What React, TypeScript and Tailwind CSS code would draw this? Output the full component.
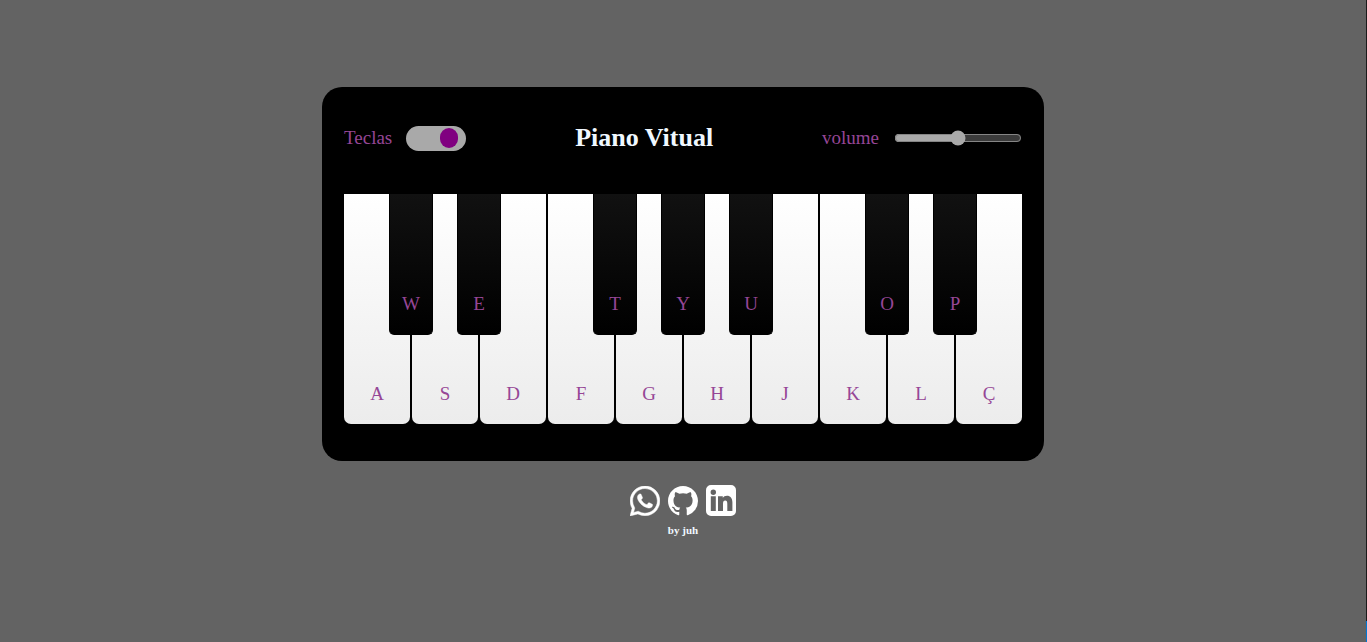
import { useState } from "react";
import { BsWhatsapp, BsGithub } from "react-icons/bs";

const keys: { white: string; black?: string }[] = [
  { white: "A", black: "W" },
  { white: "S", black: "E" },
  { white: "D" },
  { white: "F", black: "T" },
  { white: "G", black: "Y" },
  { white: "H", black: "U" },
  { white: "J" },
  { white: "K", black: "O" },
  { white: "L", black: "P" },
  { white: "Ç" },
];

function LinkedinIcon() {
  return (
    <svg viewBox="0 0 30 31" className="h-[31px] w-[30px]" aria-hidden="true">
      <path
        fill="currentColor"
        fillRule="evenodd"
        d="M5 0h20a5 5 0 0 1 5 5v21a5 5 0 0 1-5 5H5a5 5 0 0 1-5-5V5a5 5 0 0 1 5-5zM7.3 4.6a2.7 2.7 0 1 0 0 5.4a2.7 2.7 0 1 0 0-5.4zM4.8 11.2V26h5V11.2zM12 11.2V26h5v-7.2c0-2.1.7-3.2 2.2-3.2s2.1 1.1 2.1 3.2V26h5.1v-8.6c0-4.4-2.1-6.7-5.4-6.7c-2 0-3.4.9-4.2 2.2v-1.7z"
      />
    </svg>
  );
}

const links = [
  { label: "WhatsApp", icon: <BsWhatsapp className="size-[30px]" strokeWidth={0.25} /> },
  { label: "GitHub", icon: <BsGithub className="size-[30px]" /> },
  { label: "LinkedIn", icon: <LinkedinIcon /> },
];

export default function App() {
  const [showKeys, setShowKeys] = useState(true);
  const [volume, setVolume] = useState(0.5);
  const labelClass = showKeys ? "" : "invisible";

  return (
    <div className="flex min-h-screen bg-[#636363] font-['Liberation_Serif','Times_New_Roman',serif]">
      <main className="flex flex-1 flex-col items-center justify-center pb-[18px]">
        <section className="rounded-[20px] bg-black px-[22px] pt-9 pb-[37px]">
          <header className="flex items-center justify-between text-[19px] leading-7 text-[#964696]">
            <label className="flex items-center gap-[14px]">
              Teclas
              <input
                type="checkbox"
                checked={showKeys}
                onChange={(e) => setShowKeys(e.target.checked)}
                className="flex h-[25px] w-[60px] appearance-none items-center rounded-full bg-[#a9a9a9] px-2 before:h-5 before:w-[18px] before:rounded-full before:bg-[#800080] checked:justify-end"
              />
            </label>
            <h1 className="text-[26px] leading-[30px] font-bold text-[#f0f8ff]">Piano Vitual</h1>
            <label className="flex items-center gap-[15px]">
              volume
              <input
                type="range"
                min={0}
                max={1}
                step="any"
                value={volume}
                onChange={(e) => setVolume(Number(e.target.value))}
                className="w-32 accent-[#a9a9a9]"
              />
            </label>
          </header>
          <div className="mt-[41px] flex gap-0.5 text-[19px] leading-7 text-[#964696]">
            {keys.map(({ white, black }) => (
              <div key={white} className="relative">
                <button
                  type="button"
                  className="flex h-[230px] w-[66px] items-end justify-center rounded-b-[7px] bg-[linear-gradient(#fff,#ececec)] pb-4"
                >
                  <span className={labelClass}>{white}</span>
                </button>
                {black && (
                  <button
                    type="button"
                    className="absolute top-0 -right-[23px] z-10 flex h-[141px] w-11 items-end justify-center rounded-b-[5px] border border-t-0 border-black bg-[linear-gradient(#111,#000)] pb-4"
                  >
                    <span className={labelClass}>{black}</span>
                  </button>
                )}
              </div>
            ))}
          </div>
        </section>
        <footer className="mt-6 flex flex-col items-center text-white">
          <nav className="flex items-center gap-2">
            {links.map(({ label, icon }) => (
              <a key={label} href="#" aria-label={label}>
                {icon}
              </a>
            ))}
          </nav>
          <p className="mt-[7px] text-[11px] leading-[14px] font-bold text-[#f0f8ff]">by juh</p>
        </footer>
      </main>
      <div className="flex w-px flex-col">
        <div className="flex-1 bg-[#1a1a1a]" />
        <div className="h-[21px] bg-[#0078d4]" />
      </div>
    </div>
  );
}
